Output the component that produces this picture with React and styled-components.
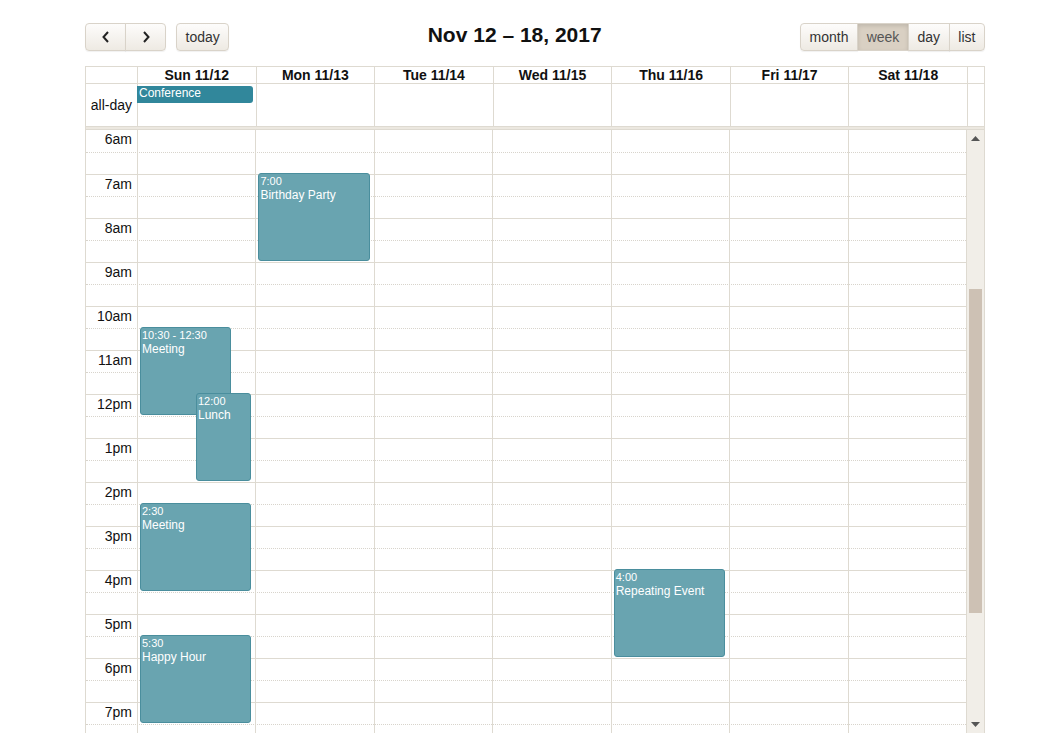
import React from "react";
import styled, { createGlobalStyle } from "styled-components";

const HOUR = 44;
const FIRST_HOUR = 6;
const LAST_HOUR = 19;

const days = ["Sun 11/12", "Mon 11/13", "Tue 11/14", "Wed 11/15", "Thu 11/16", "Fri 11/17", "Sat 11/18"];

const events = [
  { day: 1, start: 7, end: 9, time: "7:00", title: "Birthday Party", left: 2, right: 4 },
  { day: 0, start: 10.5, end: 12.5, time: "10:30 - 12:30", title: "Meeting", left: 2, right: 24 },
  { day: 0, start: 12, end: 14, time: "12:00", title: "Lunch", left: 58, right: 4 },
  { day: 0, start: 14.5, end: 16.5, time: "2:30", title: "Meeting", left: 2, right: 4 },
  { day: 0, start: 17.5, end: 19.5, time: "5:30", title: "Happy Hour", left: 2, right: 4 },
  { day: 4, start: 16, end: 18, time: "4:00", title: "Repeating Event", left: 2, right: 4 },
];

function hourLabel(h) {
  const suffix = h < 12 ? "am" : "pm";
  const n = h % 12 === 0 ? 12 : h % 12;
  return n + suffix;
}

const slats = [];
for (let h = FIRST_HOUR; h <= LAST_HOUR; h++) {
  slats.push({ key: h + "a", label: hourLabel(h), minor: false, first: h === FIRST_HOUR });
  slats.push({ key: h + "b", label: "", minor: true, first: false });
}

const GlobalStyle = createGlobalStyle`
  body {
    margin: 0;
    background: #fff;
    font-family: "Liberation Sans", Arial, sans-serif;
    color: #000;
  }
`;

function Chevron({ dir }) {
  return (
    <svg width="10" height="14" viewBox="0 0 10 14">
      <polyline
        points={dir === "left" ? "7,2 2.5,7 7,12" : "3,2 7.5,7 3,12"}
        fill="none"
        stroke="#222"
        strokeWidth="2"
      />
    </svg>
  );
}

function Arrow({ dir }) {
  return (
    <svg width="9" height="5" viewBox="0 0 9 5">
      <polygon points={dir === "up" ? "4.5,0 9,5 0,5" : "0,0 9,0 4.5,5"} fill="#555" />
    </svg>
  );
}

export default function App() {
  return (
    <Page>
      <GlobalStyle />
      <Toolbar>
        <Left>
          <Group>
            <Button aria-label="prev">
              <Chevron dir="left" />
            </Button>
            <Button aria-label="next">
              <Chevron dir="right" />
            </Button>
          </Group>
          <Button>today</Button>
        </Left>
        <Title>Nov 12 – 18, 2017</Title>
        <Group>
          <Button>month</Button>
          <Button active>week</Button>
          <Button>day</Button>
          <Button>list</Button>
        </Group>
      </Toolbar>

      <Calendar>
        <HeadRow>
          <AxisCell />
          {days.map((d) => (
            <DayHead key={d}>{d}</DayHead>
          ))}
          <Gutter />
        </HeadRow>
        <AllDayRow>
          <AllDayLabel>all-day</AllDayLabel>
          {days.map((d, i) => (
            <AllDayCell key={d}>
              {i === 0 && <AllDayEvent>Conference</AllDayEvent>}
            </AllDayCell>
          ))}
          <Gutter />
        </AllDayRow>
        <Divider />
        <Body>
          <Viewport>
            <Stack>
              <Slats>
                {slats.map((s) => (
                  <Slat key={s.key} minor={s.minor} first={s.first}>
                    <SlatLabel>{s.label}</SlatLabel>
                    <SlatFill />
                  </Slat>
                ))}
              </Slats>
              <Columns>
                <AxisSpacer />
                {days.map((d, i) => (
                  <DayColumn key={d}>
                    {events
                      .filter((e) => e.day === i)
                      .map((e) => (
                        <Event
                          key={e.title + e.start}
                          style={{
                            top: (e.start - FIRST_HOUR) * HOUR - 1,
                            height: (e.end - e.start) * HOUR,
                            left: e.left,
                            right: e.right,
                          }}
                        >
                          <EventTime>{e.time}</EventTime>
                          <EventTitle>{e.title}</EventTitle>
                        </Event>
                      ))}
                  </DayColumn>
                ))}
              </Columns>
            </Stack>
          </Viewport>
          <Scrollbar>
            <ScrollButton>
              <Arrow dir="up" />
            </ScrollButton>
            <Track>
              <Thumb style={{ marginTop: 142, height: 324 }} />
            </Track>
            <ScrollButton>
              <Arrow dir="down" />
            </ScrollButton>
          </Scrollbar>
        </Body>
      </Calendar>
    </Page>
  );
}

const BORDER = "#dedad1";

const Page = styled.div`
  width: 900px;
  margin-left: 85px;
  padding-top: 23px;
  font-family: "Liberation Sans", Arial, sans-serif;
`;

const Toolbar = styled.div`
  display: flex;
  align-items: center;
  height: 28px;
  margin-bottom: 15px;
`;

const Left = styled.div`
  display: flex;
  gap: 10px;
`;

const Title = styled.h2`
  flex: 1;
  margin: 0 0 4px 0;
  text-align: center;
  font-size: 21px;
  font-weight: bold;
  color: #111;
`;

const Group = styled.div`
  display: flex;
  & > button {
    border-radius: 0;
  }
  & > button + button {
    margin-left: -1px;
  }
  & > button:first-child {
    border-radius: 4px 0 0 4px;
  }
  & > button:last-child {
    border-radius: 0 4px 4px 0;
  }
`;

const Button = styled.button`
  height: 28px;
  min-width: 36px;
  padding: 0 8.6px;
  display: flex;
  align-items: center;
  justify-content: center;
  border: 1px solid #d9d3c9;
  border-radius: 4px;
  background: ${(p) =>
    p.active ? "#d9d0c3" : "linear-gradient(#fdfcfb, #eeeae3)"};
  box-shadow: ${(p) =>
    p.active ? "inset 0 2px 4px rgba(0,0,0,0.12)" : "0 1px 1px rgba(0,0,0,0.06)"};
  color: ${(p) => (p.active ? "#555" : "#333")};
  font-family: "Liberation Sans", Arial, sans-serif;
  font-size: 14px;
  cursor: pointer;
  &[aria-label] {
    width: 41px;
  }
`;

const Calendar = styled.div`
  border: 1px solid ${BORDER};
  border-bottom: none;
`;

const rowColumns = `51px repeat(7, 1fr) 17px`;

const HeadRow = styled.div`
  display: grid;
  grid-template-columns: ${rowColumns};
  height: 16px;
`;

const AxisCell = styled.div``;

const DayHead = styled.div`
  border-left: 1px solid ${BORDER};
  text-align: center;
  font-size: 14px;
  font-weight: bold;
  line-height: 16px;
  color: #111;
`;

const Gutter = styled.div`
  border-left: 1px solid ${BORDER};
`;

const AllDayRow = styled.div`
  display: grid;
  grid-template-columns: ${rowColumns};
  height: 42px;
  border-top: 1px solid ${BORDER};
`;

const AllDayLabel = styled.div`
  display: flex;
  align-items: flex-end;
  justify-content: flex-end;
  padding: 0 5px 13px 0;
  font-size: 14px;
  color: #111;
`;

const AllDayCell = styled.div`
  border-left: 1px solid ${BORDER};
  padding-top: 2px;
  position: relative;
`;

const AllDayEvent = styled.div`
  margin: 0 3px 0 -1px;
  height: 17px;
  padding: 0 2px;
  background: #31879b;
  border-radius: 0 3px 3px 0;
  color: #fff;
  font-size: 12px;
  line-height: 15px;
`;

const Divider = styled.div`
  height: 2px;
  background: #ece8e0;
  border-top: 1px solid ${BORDER};
  border-bottom: 1px solid ${BORDER};
`;

const Body = styled.div`
  display: flex;
  height: 603px;
`;

const Viewport = styled.div`
  flex: 1;
  overflow: hidden;
`;

const Stack = styled.div`
  display: grid;
`;

const Slats = styled.div`
  grid-area: 1 / 1;
`;

const Slat = styled.div`
  display: flex;
  height: 22px;
  box-sizing: border-box;
  border-top: ${(p) =>
    p.first ? "none" : p.minor ? `1px dotted #d8d4cc` : `1px solid ${BORDER}`};
`;

const SlatLabel = styled.div`
  width: 51px;
  box-sizing: border-box;
  padding-right: 5px;
  text-align: right;
  font-size: 14px;
  line-height: 19px;
  color: #111;
`;

const SlatFill = styled.div`
  flex: 1;
`;

const Columns = styled.div`
  grid-area: 1 / 1;
  display: grid;
  grid-template-columns: 51px repeat(7, 1fr);
`;

const AxisSpacer = styled.div``;

const DayColumn = styled.div`
  position: relative;
  border-left: 1px solid ${BORDER};
`;

const Event = styled.div`
  position: absolute;
  box-sizing: border-box;
  background: #69a4b0;
  border: 1px solid #4a8e9d;
  border-radius: 3px;
  color: #fff;
  padding: 1px 1px;
  overflow: hidden;
`;

const EventTime = styled.div`
  font-size: 11px;
  line-height: 13px;
`;

const EventTitle = styled.div`
  font-size: 12px;
  line-height: 14px;
`;

const Scrollbar = styled.div`
  width: 17px;
  border-left: 1px solid ${BORDER};
  background: #f1eee8;
  display: flex;
  flex-direction: column;
`;

const ScrollButton = styled.div`
  height: 17px;
  display: flex;
  align-items: center;
  justify-content: center;
`;

const Track = styled.div`
  flex: 1;
  display: flex;
  flex-direction: column;
  align-items: center;
`;

const Thumb = styled.div`
  width: 13px;
  background: #cdc1b4;
`;
